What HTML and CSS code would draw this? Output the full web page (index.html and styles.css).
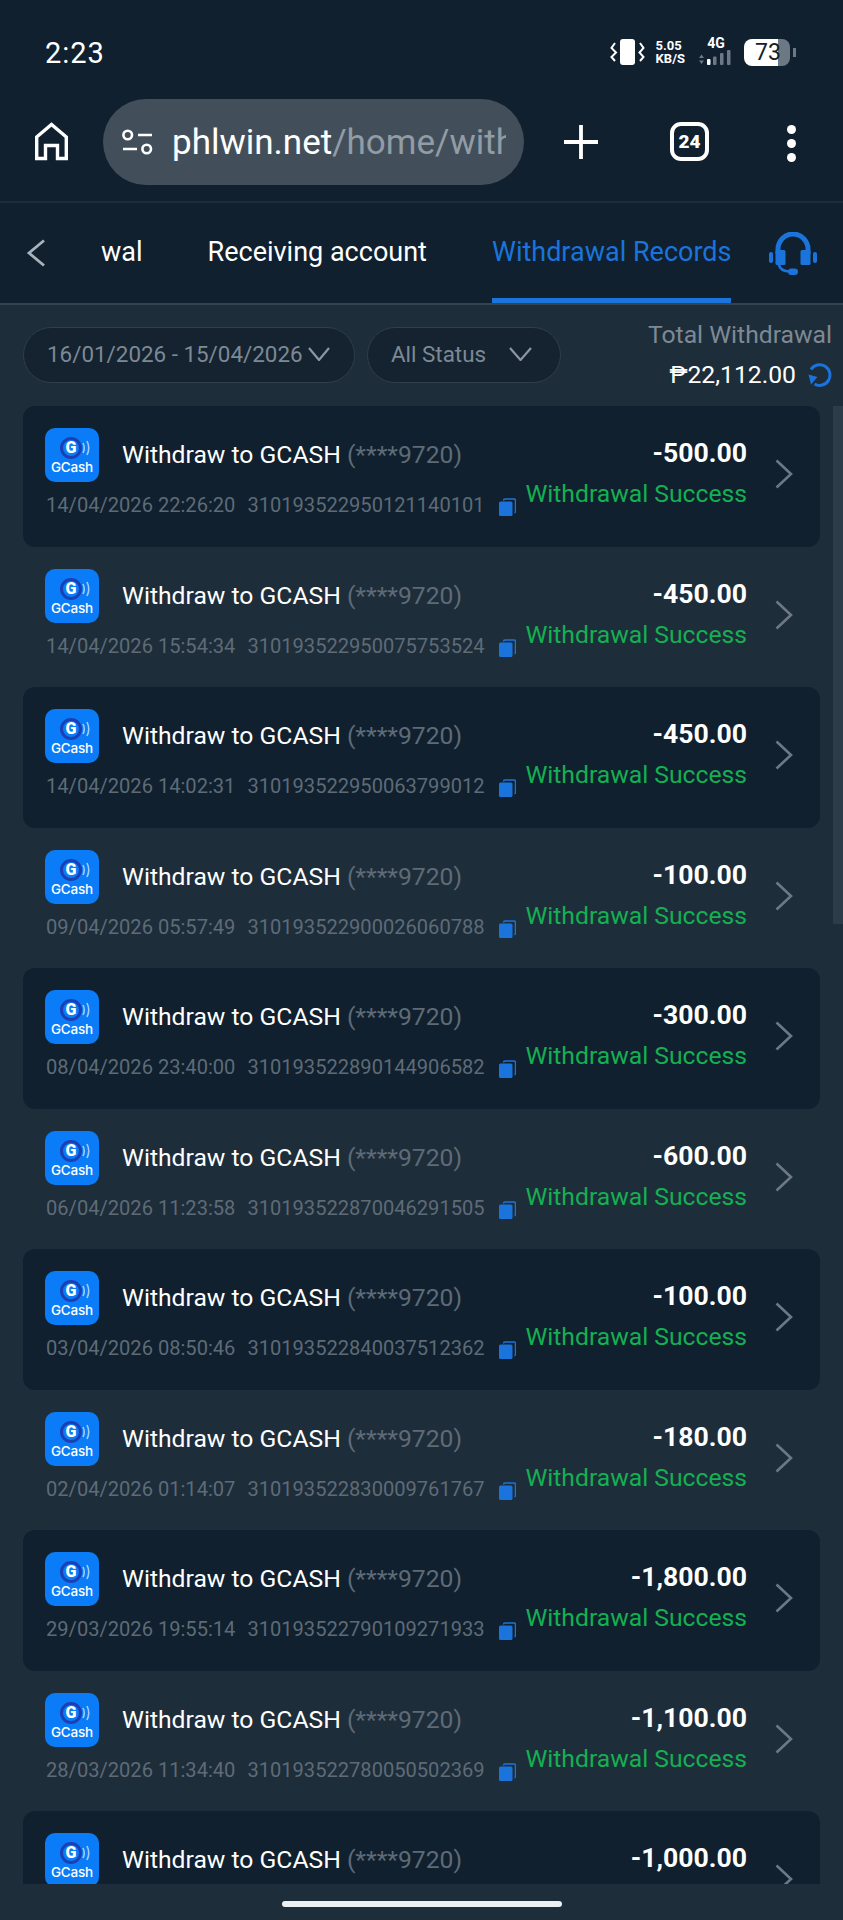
FILE: index.html
```html
<!DOCTYPE html>
<html lang="en">
<head>
  <meta charset="UTF-8">
  <meta name="viewport" content="width=device-width, initial-scale=1">
  <title>Withdrawal Records</title>
  <link rel="stylesheet" href="styles.css">
</head>
<body>
  <svg class="defs" width="0" height="0">
    <symbol id="arcs" viewBox="0 0 8 16">
      <path d="M1 3q2.500 5 0 10M5 1q3.500 7 0 14" fill="none" stroke="#9fcdfb" stroke-width="1.600"/>
    </symbol>
    <symbol id="copy" viewBox="0 0 17 18">
      <path d="M4.500 2.500q0-1.500 1.500-1.500h9q1.500 0 1.500 1.500v11q0 1-1 1.300" fill="none" stroke="#1a74dc" stroke-width="1.500"/>
      <rect x="0" y="3.500" width="13.500" height="14.500" rx="1.500" fill="#1a74dc"/>
    </symbol>
    <symbol id="chev" viewBox="0 0 18 30">
      <path d="M1.500 1.500 16 15 1.500 28.500" fill="none" stroke="#6c7985" stroke-width="2.600"/>
    </symbol>
  </svg>

  <div class="statusbar">
    <span class="clock">2:23</span>
    <div class="status-icons">
      <svg width="36" height="26" viewBox="0 0 36 26">
        <rect x="10" y="0" width="15" height="26" rx="3" fill="#fff"/>
        <path d="M5 4 1.500 9 6 13.500 1.500 18 5 22M30 4 33.500 9 29.500 13.500 33.500 18 30 22" fill="none" stroke="#fff" stroke-width="2"/>
      </svg>
      <div class="netspeed"><span>5.05</span><span>KB/S</span></div>
      <div class="signal">
        <span class="signal-label">4G</span>
        <svg width="34" height="17" viewBox="0 0 34 17">
          <path d="M1 9 3.500 5.500 6 9zM1 11.500 3.500 15 6 11.500z" fill="#6c7985"/>
          <rect x="9" y="10" width="3.500" height="6" rx="1" fill="#fff"/>
          <rect x="15" y="7.500" width="3.500" height="8.500" rx="1" fill="#6c7985"/>
          <rect x="22" y="4" width="3.500" height="12" rx="1" fill="#6c7985"/>
          <rect x="29" y="1" width="3.500" height="15" rx="1" fill="#6c7985"/>
        </svg>
      </div>
      <div class="battery"><span class="battery-level">73</span></div>
      <span class="battery-cap"></span>
    </div>
  </div>

  <div class="toolbar">
    <svg class="home-icon" width="37" height="40" viewBox="0 0 37 40">
      <path d="M3.700 36.500V15L18.500 2.500 33.300 15V36.500H24.500V23.500H12.500V36.500z" fill="none" stroke="#fff" stroke-width="3.400"/>
    </svg>
    <div class="urlbar">
      <svg width="31" height="26" viewBox="0 0 31 26">
        <circle cx="5.700" cy="6" r="4.300" fill="none" stroke="#fff" stroke-width="2.600"/>
        <path d="M16 6h14M1 20h14" stroke="#fff" stroke-width="2.600"/>
        <circle cx="24.700" cy="20" r="4.300" fill="none" stroke="#fff" stroke-width="2.600"/>
      </svg>
      <div class="url"><span class="url-host">phlwin.net</span>/home/withdraw</div>
    </div>
    <svg class="plus-icon" width="36" height="36" viewBox="0 0 36 36">
      <path d="M18 1v34M1 18h34" stroke="#fff" stroke-width="3.800"/>
    </svg>
    <div class="tabcount">24</div>
    <div class="menu-dots"><i></i><i></i><i></i></div>
  </div>

  <div class="tabbar">
    <svg class="back-icon" width="20" height="28" viewBox="0 0 20 28">
      <path d="M18 1.500 3 14l15 12.500" fill="none" stroke="#a9b2ba" stroke-width="2.800"/>
    </svg>
    <span class="tab tab-cut">wal</span>
    <span class="tab">Receiving account</span>
    <span class="tab tab-active">Withdrawal Records</span>
    <svg class="support-icon" width="48" height="44" viewBox="0 0 48 44">
      <path d="M9 22V17a15 15 0 0 1 30 0v5" fill="none" stroke="#1a74dc" stroke-width="5"/>
      <rect x="6.500" y="18" width="10" height="15" rx="1.500" fill="#1a74dc"/>
      <rect x="31.500" y="18" width="10" height="15" rx="1.500" fill="#1a74dc"/>
      <rect x="0" y="20" width="4" height="11" rx="2" fill="#1a74dc"/>
      <rect x="44" y="20" width="4" height="11" rx="2" fill="#1a74dc"/>
      <path d="M10 33q1 6 11 6.500" fill="none" stroke="#1a74dc" stroke-width="2.600"/>
      <rect x="19" y="36.500" width="10" height="6.500" rx="3.200" fill="#1a74dc"/>
    </svg>
  </div>

  <div class="filters">
    <div class="pill pill-date">16/01/2026 - 15/04/2026
      <svg width="22" height="14" viewBox="0 0 22 14"><path d="M1 1l10 12L21 1" fill="none" stroke="#8a97a2" stroke-width="2.200"/></svg>
    </div>
    <div class="pill pill-status">All Status
      <svg width="23" height="14" viewBox="0 0 23 14"><path d="M1 1l10.500 12L22 1" fill="none" stroke="#8a97a2" stroke-width="2.200"/></svg>
    </div>
    <div class="total">
      <span class="total-label">Total Withdrawal</span>
      <div class="total-amount">₱22,112.00
        <svg width="24" height="24" viewBox="0 0 24 24">
          <path d="M3 6.500A10.300 10.300 0 1 1 6.500 21" fill="none" stroke="#1a74dc" stroke-width="3"/>
          <path d="M0.500 11.500 9.500 14 3 21.500z" fill="#1a74dc"/>
        </svg>
      </div>
    </div>
  </div>

  <div class="records">
    <div class="scrollbar"></div>

    <div class="row">
      <div class="gcash"><div class="gcash-mark"><b>G</b><svg width="8" height="16"><use href="#arcs"/></svg></div><span>GCash</span></div>
      <div class="row-info">
        <div class="row-title">Withdraw to GCASH <span class="mask">(****9720)</span></div>
        <div class="row-meta"><span>14/04/2026 22:26:20</span><span>310193522950121140101</span><svg width="17" height="18"><use href="#copy"/></svg></div>
      </div>
      <div class="row-side"><div class="row-amount">-500.00</div><div class="row-status">Withdrawal Success</div></div>
      <svg class="row-chev" width="18" height="30"><use href="#chev"/></svg>
    </div>

    <div class="row">
      <div class="gcash"><div class="gcash-mark"><b>G</b><svg width="8" height="16"><use href="#arcs"/></svg></div><span>GCash</span></div>
      <div class="row-info">
        <div class="row-title">Withdraw to GCASH <span class="mask">(****9720)</span></div>
        <div class="row-meta"><span>14/04/2026 15:54:34</span><span>310193522950075753524</span><svg width="17" height="18"><use href="#copy"/></svg></div>
      </div>
      <div class="row-side"><div class="row-amount">-450.00</div><div class="row-status">Withdrawal Success</div></div>
      <svg class="row-chev" width="18" height="30"><use href="#chev"/></svg>
    </div>

    <div class="row">
      <div class="gcash"><div class="gcash-mark"><b>G</b><svg width="8" height="16"><use href="#arcs"/></svg></div><span>GCash</span></div>
      <div class="row-info">
        <div class="row-title">Withdraw to GCASH <span class="mask">(****9720)</span></div>
        <div class="row-meta"><span>14/04/2026 14:02:31</span><span>310193522950063799012</span><svg width="17" height="18"><use href="#copy"/></svg></div>
      </div>
      <div class="row-side"><div class="row-amount">-450.00</div><div class="row-status">Withdrawal Success</div></div>
      <svg class="row-chev" width="18" height="30"><use href="#chev"/></svg>
    </div>

    <div class="row">
      <div class="gcash"><div class="gcash-mark"><b>G</b><svg width="8" height="16"><use href="#arcs"/></svg></div><span>GCash</span></div>
      <div class="row-info">
        <div class="row-title">Withdraw to GCASH <span class="mask">(****9720)</span></div>
        <div class="row-meta"><span>09/04/2026 05:57:49</span><span>310193522900026060788</span><svg width="17" height="18"><use href="#copy"/></svg></div>
      </div>
      <div class="row-side"><div class="row-amount">-100.00</div><div class="row-status">Withdrawal Success</div></div>
      <svg class="row-chev" width="18" height="30"><use href="#chev"/></svg>
    </div>

    <div class="row">
      <div class="gcash"><div class="gcash-mark"><b>G</b><svg width="8" height="16"><use href="#arcs"/></svg></div><span>GCash</span></div>
      <div class="row-info">
        <div class="row-title">Withdraw to GCASH <span class="mask">(****9720)</span></div>
        <div class="row-meta"><span>08/04/2026 23:40:00</span><span>310193522890144906582</span><svg width="17" height="18"><use href="#copy"/></svg></div>
      </div>
      <div class="row-side"><div class="row-amount">-300.00</div><div class="row-status">Withdrawal Success</div></div>
      <svg class="row-chev" width="18" height="30"><use href="#chev"/></svg>
    </div>

    <div class="row">
      <div class="gcash"><div class="gcash-mark"><b>G</b><svg width="8" height="16"><use href="#arcs"/></svg></div><span>GCash</span></div>
      <div class="row-info">
        <div class="row-title">Withdraw to GCASH <span class="mask">(****9720)</span></div>
        <div class="row-meta"><span>06/04/2026 11:23:58</span><span>310193522870046291505</span><svg width="17" height="18"><use href="#copy"/></svg></div>
      </div>
      <div class="row-side"><div class="row-amount">-600.00</div><div class="row-status">Withdrawal Success</div></div>
      <svg class="row-chev" width="18" height="30"><use href="#chev"/></svg>
    </div>

    <div class="row">
      <div class="gcash"><div class="gcash-mark"><b>G</b><svg width="8" height="16"><use href="#arcs"/></svg></div><span>GCash</span></div>
      <div class="row-info">
        <div class="row-title">Withdraw to GCASH <span class="mask">(****9720)</span></div>
        <div class="row-meta"><span>03/04/2026 08:50:46</span><span>310193522840037512362</span><svg width="17" height="18"><use href="#copy"/></svg></div>
      </div>
      <div class="row-side"><div class="row-amount">-100.00</div><div class="row-status">Withdrawal Success</div></div>
      <svg class="row-chev" width="18" height="30"><use href="#chev"/></svg>
    </div>

    <div class="row">
      <div class="gcash"><div class="gcash-mark"><b>G</b><svg width="8" height="16"><use href="#arcs"/></svg></div><span>GCash</span></div>
      <div class="row-info">
        <div class="row-title">Withdraw to GCASH <span class="mask">(****9720)</span></div>
        <div class="row-meta"><span>02/04/2026 01:14:07</span><span>310193522830009761767</span><svg width="17" height="18"><use href="#copy"/></svg></div>
      </div>
      <div class="row-side"><div class="row-amount">-180.00</div><div class="row-status">Withdrawal Success</div></div>
      <svg class="row-chev" width="18" height="30"><use href="#chev"/></svg>
    </div>

    <div class="row">
      <div class="gcash"><div class="gcash-mark"><b>G</b><svg width="8" height="16"><use href="#arcs"/></svg></div><span>GCash</span></div>
      <div class="row-info">
        <div class="row-title">Withdraw to GCASH <span class="mask">(****9720)</span></div>
        <div class="row-meta"><span>29/03/2026 19:55:14</span><span>310193522790109271933</span><svg width="17" height="18"><use href="#copy"/></svg></div>
      </div>
      <div class="row-side"><div class="row-amount">-1,800.00</div><div class="row-status">Withdrawal Success</div></div>
      <svg class="row-chev" width="18" height="30"><use href="#chev"/></svg>
    </div>

    <div class="row">
      <div class="gcash"><div class="gcash-mark"><b>G</b><svg width="8" height="16"><use href="#arcs"/></svg></div><span>GCash</span></div>
      <div class="row-info">
        <div class="row-title">Withdraw to GCASH <span class="mask">(****9720)</span></div>
        <div class="row-meta"><span>28/03/2026 11:34:40</span><span>310193522780050502369</span><svg width="17" height="18"><use href="#copy"/></svg></div>
      </div>
      <div class="row-side"><div class="row-amount">-1,100.00</div><div class="row-status">Withdrawal Success</div></div>
      <svg class="row-chev" width="18" height="30"><use href="#chev"/></svg>
    </div>

    <div class="row">
      <div class="gcash"><div class="gcash-mark"><b>G</b><svg width="8" height="16"><use href="#arcs"/></svg></div><span>GCash</span></div>
      <div class="row-info">
        <div class="row-title">Withdraw to GCASH <span class="mask">(****9720)</span></div>
      </div>
      <div class="row-side"><div class="row-amount">-1,000.00</div></div>
      <svg class="row-chev" width="18" height="30"><use href="#chev"/></svg>
    </div>
  </div>

  <div class="gesture"><span class="gesture-bar"></span></div>
</body>
</html>
```

FILE: styles.css
```css
* {
  box-sizing: border-box;
}

body {
  font-family: Roboto, 'Noto Sans', sans-serif;
  margin: 0;
  width: 843px;
  height: 1920px;
  background-color: #1e2d3a;
  color: #fff;
  display: flex;
  flex-direction: column;
  overflow: hidden;
}

.defs {
  position: absolute;
}

/* status bar */
.statusbar {
  height: 99px;
  flex-shrink: 0;
  background-color: #10202f;
  display: flex;
  justify-content: space-between;
  align-items: flex-start;
  padding: 36px 0 0 45px;
}

.clock {
  font-size: 29px;
  line-height: 34px;
  letter-spacing: 1px;
}

.status-icons {
  display: flex;
  align-items: center;
  margin: 2px 47px 0 0;
}

.netspeed {
  display: flex;
  flex-direction: column;
  margin-left: 10px;
  font-size: 13px;
  line-height: 13px;
  font-weight: 700;
}

.signal {
  display: flex;
  flex-direction: column;
  align-items: center;
  margin-left: 13px;
}

.signal-label {
  font-size: 14px;
  line-height: 11px;
  font-weight: 700;
  margin-left: 2px;
}

.battery {
  width: 46px;
  height: 27px;
  margin-left: 12px;
  background: linear-gradient(90deg, #fff 0 74%, #6c7985 74%);
  border-radius: 8px;
  display: flex;
  align-items: center;
  justify-content: center;
}

.battery-level {
  color: #10202f;
  font-size: 23px;
  margin-left: 2px;
}

.battery-cap {
  width: 3px;
  height: 9px;
  margin-left: 3px;
  background-color: #6c7985;
}

/* browser toolbar */
.toolbar {
  height: 104px;
  flex-shrink: 0;
  background-color: #10202f;
  border-bottom: 2px solid #1e2d3a;
  display: flex;
  align-items: flex-start;
  padding-left: 33px;
}

.home-icon {
  margin: 23px 0 0 0;
}

.urlbar {
  width: 421px;
  height: 86px;
  margin-left: 33px;
  background-color: #424f5a;
  border-radius: 43px;
  display: flex;
  align-items: center;
  padding: 0 18px 0 19px;
}

.urlbar svg {
  flex-shrink: 0;
}

.url {
  margin-left: 19px;
  font-size: 35px;
  color: #929ca5;
  white-space: nowrap;
  overflow: hidden;
}

.url-host {
  color: #fff;
}

.plus-icon {
  margin: 25px 0 0 39px;
}

.tabcount {
  width: 39px;
  height: 39px;
  margin: 23px 0 0 71px;
  border: 4px solid #fff;
  border-radius: 11px;
  font-size: 19px;
  font-weight: 900;
  display: flex;
  align-items: center;
  justify-content: center;
}

.menu-dots {
  display: flex;
  flex-direction: column;
  gap: 5px;
  margin: 26px 0 0 78px;
}

.menu-dots i {
  width: 9px;
  height: 9px;
  background-color: #fff;
  border-radius: 50%;
}

/* tabs */
.tabbar {
  height: 102px;
  flex-shrink: 0;
  background-color: #10202f;
  border-bottom: 2px solid #34434f;
  display: flex;
  align-items: flex-start;
  padding-left: 26px;
}

.back-icon {
  margin-top: 36px;
}

.tab {
  font-size: 27px;
  line-height: 99px;
  height: 100px;
  white-space: nowrap;
}

.tab-cut {
  margin-left: 55px;
}

.tab:nth-of-type(2) {
  margin-left: 65px;
}

.tab-active {
  margin-left: 65px;
  color: #1a74dc;
  border-bottom: 5px solid #1a74dc;
}

.support-icon {
  margin: 29px 0 0 38px;
}

/* filters */
.filters {
  height: 101px;
  flex-shrink: 0;
  display: flex;
  align-items: flex-start;
  padding: 22px 11px 0 23px;
}

.pill {
  height: 56px;
  display: flex;
  align-items: center;
  background-color: #14232f;
  border: 1px solid #2f3e4a;
  border-radius: 28px;
  color: #7d8995;
  font-size: 22.400px;
  line-height: 24px;
  padding-bottom: 2px;
  white-space: nowrap;
}

.pill-date {
  width: 332px;
  padding-left: 23px;
  gap: 5px;
}

.pill-status {
  width: 194px;
  margin-left: 12px;
  padding-left: 23px;
  gap: 23px;
}

.total {
  margin-left: auto;
  margin-top: -10px;
  display: flex;
  flex-direction: column;
  align-items: flex-end;
}

.total-label {
  font-size: 24.700px;
  line-height: 36px;
  color: #7d8995;
}

.total-amount {
  display: flex;
  align-items: center;
  gap: 12px;
  margin-top: 4px;
  font-size: 24.700px;
  line-height: 36px;
}

/* records */
.records {
  position: relative;
  height: 1478px;
  flex-shrink: 0;
  overflow: hidden;
  padding: 0 23px;
}

.scrollbar {
  position: absolute;
  top: 0;
  right: 0;
  width: 10px;
  height: 518px;
  background-color: #2c3d49;
}

.row {
  height: 140.5px;
  padding: 22px 27px 0 22px;
  border-radius: 12px;
  display: flex;
  align-items: flex-start;
}

.row:nth-of-type(even) {
  background-color: #10202e;
}

.gcash {
  width: 54px;
  height: 54px;
  flex-shrink: 0;
  background-color: #0a7cf8;
  border-radius: 10px;
  display: flex;
  flex-direction: column;
  align-items: center;
  overflow: hidden;
  padding-top: 9px;
}

.gcash-mark {
  display: flex;
  align-items: center;
  margin-left: 6px;
}

.gcash-mark b {
  width: 22px;
  height: 22px;
  border: 3px solid #1b3fb5;
  border-radius: 50%;
  font-size: 16px;
  line-height: 16px;
  font-weight: 900;
  text-align: center;
}

.gcash span {
  font-family: Inter, sans-serif;
  font-size: 13.500px;
  font-weight: 500;
  line-height: 15px;
  margin-top: 1px;
  letter-spacing: -0.2px;
}

.row-info {
  margin-left: -54px;
  padding-top: 13px;
}

.row-title {
  margin-left: 77px;
  font-size: 24.700px;
  line-height: 28px;
  white-space: nowrap;
}

.mask {
  color: #5e6b77;
}

.row-meta {
  display: flex;
  align-items: center;
  gap: 12px;
  margin: 24px 0 0 1px;
  font-size: 20.100px;
  line-height: 24px;
  color: #5e6b77;
  white-space: nowrap;
}

.row-meta svg {
  margin: 4px 0 0 2px;
}

.row-side {
  margin-left: auto;
  padding-top: 9px;
  display: flex;
  flex-direction: column;
  align-items: flex-end;
}

.row-amount {
  font-size: 26.600px;
  font-weight: 700;
  line-height: 32px;
}

.row-status {
  margin-top: 11px;
  font-size: 24.700px;
  line-height: 28px;
  color: #14b052;
}

.row-chev {
  margin: 31px 0 0 28px;
  flex-shrink: 0;
}

/* gesture bar */
.gesture {
  flex: 1;
  display: flex;
  justify-content: center;
  padding-top: 17px;
}

.gesture-bar {
  width: 280px;
  height: 6px;
  background-color: #edf0f2;
  border-radius: 3px;
}
```
